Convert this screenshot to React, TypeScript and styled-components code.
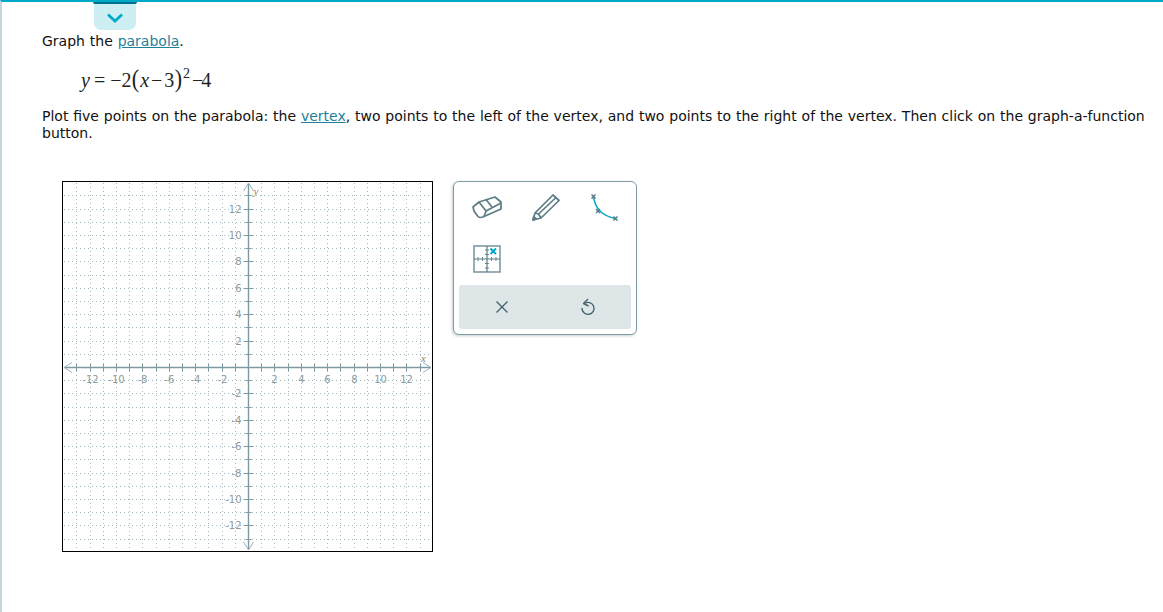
import React from 'react';
import styled, { createGlobalStyle } from 'styled-components';

const GlobalStyle = createGlobalStyle`
  html, body { margin: 0; padding: 0; background: #fff; }
  body { font-family: "DejaVu Sans", Verdana, sans-serif; font-size: 14px; color: #111; word-spacing: 0.4px; }
`;

const Page = styled.div`
  position: relative;
  box-sizing: border-box;
  width: 1163px;
  height: 612px;
  overflow: hidden;
  border-top: 2px solid #00a9c7;
  border-left: 2px solid #c5d3db;
  padding: 31px 14px 0 40px;
`;

const Toggle = styled.button`
  position: absolute;
  top: 0;
  left: 92px;
  width: 42px;
  height: 28px;
  border: none;
  border-radius: 0 0 7px 7px;
  background: #cdeff4;
  padding: 3px 0 0;
  display: flex;
  align-items: center;
  justify-content: center;

  &::before {
    content: "";
    position: absolute;
    top: 0;
    left: -1px;
    right: -1px;
    height: 2px;
    border-radius: 0 0 2px 2px;
    background: #00708a;
  }
`;

const Prompt = styled.p`
  margin: 0;
  line-height: 17px;
`;

const TermLink = styled.a`
  color: #1f7f9c;
  text-decoration: underline;
`;

const Equation = styled.div`
  margin: 13px 0 0 39px;
  height: 36px;
  font-family: "Liberation Serif", "Times New Roman", serif;
  font-size: 20px;
  line-height: 34px;
  color: #222;
  white-space: nowrap;
  word-spacing: 0;
`;

const Var = styled.i`
  font-style: italic;
`;

const Op = styled.span`
  margin: 0 ${p => p.$right ?? 2}px 0 ${p => p.$left ?? 2}px;
`;

const Paren = styled.span`
  display: inline-block;
  font-size: 26px;
  font-weight: 300;
  transform: scaleX(0.85);
  margin: 0;
  line-height: 0;
`;

const Exp = styled.sup`
  font-size: 14px;
  line-height: 0;
  vertical-align: 9px;
`;

const Instructions = styled(Prompt)`
  margin-top: 9px;
`;

const Workspace = styled.div`
  display: flex;
  align-items: flex-start;
  gap: 20px;
  margin: 39px 0 0 20px;
`;

const GraphFrame = styled.svg`
  display: block;
  flex: none;
  box-sizing: border-box;
  width: 371px;
  height: 371px;
  border: 1px solid #000;
`;

const ToolPanel = styled.div`
  box-sizing: border-box;
  flex: none;
  width: 184px;
  height: 154px;
  padding: 0 5px 5px;
  border: 1px solid #7f9ca5;
  border-radius: 6px;
  box-shadow: -1px 1px 3px rgba(90, 120, 130, 0.35);
  background: #fff;
  display: flex;
  flex-direction: column;
`;

const ToolGrid = styled.div`
  display: grid;
  grid-template-columns: repeat(3, 59px);
  grid-auto-rows: 51px;
  flex: 1;
  margin-left: -2px;
`;

const ToolCell = styled.div`
  display: flex;
  align-items: center;
  justify-content: center;
`;

const ActionBar = styled.div`
  height: 44px;
  border-radius: 3px;
  background: #dfe6e8;
  display: grid;
  grid-template-columns: 1fr 1fr;
`;

const U = 13.2;
const C = 185.5;
const UNITS = Array.from({ length: 27 }, (_, i) => i - 13);
const LABELS = [-12, -10, -8, -6, -4, -2, 2, 4, 6, 8, 10, 12];
const at = (n: number) => Math.floor(C + n * U) + 0.5;

function Graph() {
  return (
    <GraphFrame viewBox="0 0 369 369">
      {UNITS.filter(n => n !== 0).map(n => (
        <g key={n} stroke="#a3b8bf" strokeWidth="1" strokeDasharray="1 3">
          <line x1={at(n)} y1="1" x2={at(n)} y2="368" />
          <line x1="1" y1={at(n)} x2="368" y2={at(n)} />
        </g>
      ))}
      <g fontFamily="'DejaVu Sans', sans-serif" fontSize="10" fill="#8a9ca2">
        {LABELS.map(n => (
          <g key={n}>
            <text x={at(n)} y={C + 15.5} textAnchor="middle">{n < 0 ? `-${-n}` : n}</text>
            <text x={C - 7} y={at(-n) + 3.5} textAnchor="end">{n < 0 ? `-${-n}` : n}</text>
          </g>
        ))}
      </g>
      <g stroke="#7d9aa3" strokeWidth="1.4" fill="none">
        <line x1="2" y1={C} x2="367" y2={C} />
        <line x1={C} y1="2" x2={C} y2="367" />
      </g>
      <g stroke="#7d9aa3" strokeWidth="1" fill="none">
        {UNITS.filter(n => n !== 0).map(n => (
          <g key={n}>
            <line x1={at(n)} y1={C - 3.5} x2={at(n)} y2={C + 3.5} />
            <line
              x1={C - (n % 2 === 0 ? 5 : 3)}
              y1={at(n)}
              x2={C + (n % 2 === 0 ? 5 : 3)}
              y2={at(n)}
            />
          </g>
        ))}
      </g>
      <g stroke="#9ab0b7" strokeWidth="1" fill="none">
        <path d={`M9 ${C - 5} L1 ${C} L9 ${C + 5}`} />
        <path d={`M360 ${C - 5} L368 ${C} L360 ${C + 5}`} />
        <path d={`M${C - 5} 9 L${C} 1 L${C + 5} 9`} />
        <path d={`M${C - 5} 360 L${C} 368 L${C + 5} 360`} />
      </g>
      <g fontFamily="'Liberation Serif', serif" fontStyle="italic" fontSize="11" fill="#8a7f78">
        <text x="358" y={C - 6}>x</text>
        <text x={C + 5} y="13">y</text>
      </g>
    </GraphFrame>
  );
}

const ink = '#5c7c86';

function EraserIcon() {
  return (
    <svg width="30" height="24" viewBox="0 0 30 24" fill="none" stroke={ink} strokeWidth="1.7" strokeLinejoin="round">
      <path d="M1 11 L7 6 L23 1 L29 6 L29 13 L12 20.5 Q8 22.5 6 20.5 L2 15 Z" />
      <path d="M7 6 L14 15 L12 20.5" />
      <path d="M14 15 L29 7" />
      <path d="M14 3.5 L20 11" />
    </svg>
  );
}

function PencilIcon() {
  return (
    <svg width="28" height="28" viewBox="0 0 28 28" fill="none" stroke={ink} strokeWidth="1.7" strokeLinejoin="round">
      <path d="M1 26 L3 19 L21 1 L27 6.5 L9 24 Z" />
      <path d="M3 19 L6.5 20 L9 24" />
      <path d="M6.5 20 L24 3.5" />
      <path d="M1 26 L1.8 22.5 L4.5 25 Z" fill={ink} />
    </svg>
  );
}

function CurveIcon() {
  return (
    <svg width="28" height="28" viewBox="0 0 28 28" fill="none">
      <path d="M2.5 2.5 Q5 21 24.5 24.5" stroke="#00a9c7" strokeWidth="1.6" />
      <g stroke={ink} strokeWidth="1.5">
        <path d="M0.5 0.5 L4.5 4.5 M4.5 0.5 L0.5 4.5" />
        <path d="M5 15 L9 19 M9 15 L5 19" />
        <path d="M22.5 22.5 L26.5 26.5 M26.5 22.5 L22.5 26.5" />
      </g>
    </svg>
  );
}

function GridToolIcon() {
  return (
    <svg width="28" height="28" viewBox="0 0 28 28" fill="none">
      <rect x="1" y="1" width="26" height="26" stroke="#7d9aa3" strokeWidth="1.6" />
      <path d="M14 1 V27 M1 14 H27" stroke={ink} strokeWidth="1.2" />
      <path d="M5 12 V16 M9.5 12 V16 M18.5 12 V16 M23 12 V16 M12 5 H16 M12 9.5 H16 M12 18.5 H16 M12 23 H16" stroke={ink} strokeWidth="0.9" />
      <path d="M17.5 3.5 L23 9 M23 3.5 L17.5 9" stroke="#00a9c7" strokeWidth="2" />
    </svg>
  );
}

function ClearIcon() {
  return (
    <svg width="14" height="14" viewBox="0 0 14 14" fill="none" stroke="#47646e" strokeWidth="1.4">
      <path d="M1.5 1.5 L12.5 12.5 M12.5 1.5 L1.5 12.5" />
    </svg>
  );
}

function UndoIcon() {
  return (
    <svg width="16" height="20" viewBox="0 0 16 20" fill="none" stroke="#47646e" strokeWidth="1.4" strokeLinejoin="round">
      <path d="M4.5 6.5 A6 6 0 1 1 2 11" />
      <path d="M8 2 L3.5 6.5 L8.5 9" />
    </svg>
  );
}

export default function App() {
  return (
    <Page>
      <GlobalStyle />
      <Toggle aria-label="collapse">
        <svg width="16" height="10" viewBox="0 0 16 10" fill="none" stroke="#00a9c7" strokeWidth="2.8">
          <path d="M1 1.5 L8 8 L15 1.5" />
        </svg>
      </Toggle>
      <Prompt>
        Graph the <TermLink href="#">parabola</TermLink>.
      </Prompt>
      <Equation>
        <Var>y</Var>
        <Op $left={4} $right={5}>=</Op>−2<Paren>(</Paren>
        <Var>x</Var>
        <Op>−</Op>3<Paren>)</Paren>
        <Exp>2</Exp>
        <Op $left={2} $right={-2}>−</Op>4
      </Equation>
      <Instructions>
        Plot five points on the parabola: the <TermLink href="#">vertex</TermLink>, two points to the left of the
        vertex, and two points to the right of the vertex. Then click on the graph-a-function button.
      </Instructions>
      <Workspace>
        <Graph />
        <ToolPanel>
          <ToolGrid>
            <ToolCell><EraserIcon /></ToolCell>
            <ToolCell><PencilIcon /></ToolCell>
            <ToolCell><CurveIcon /></ToolCell>
            <ToolCell><GridToolIcon /></ToolCell>
          </ToolGrid>
          <ActionBar>
            <ToolCell><ClearIcon /></ToolCell>
            <ToolCell><UndoIcon /></ToolCell>
          </ActionBar>
        </ToolPanel>
      </Workspace>
    </Page>
  );
}
